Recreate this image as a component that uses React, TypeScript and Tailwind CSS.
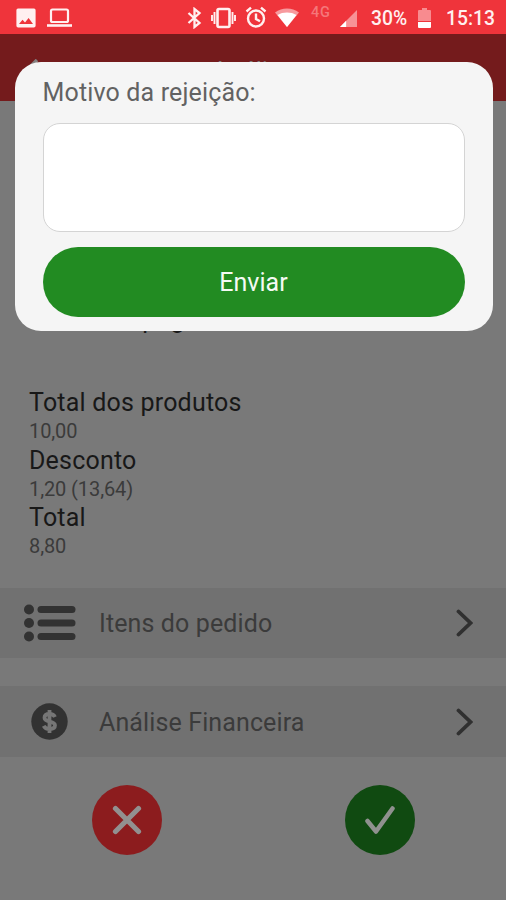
import React from "react";

const totals = [
  { label: "Total dos produtos", value: "10,00" },
  { label: "Desconto", value: "1,20 (13,64)" },
  { label: "Total", value: "8,80" },
];

function StatusBar() {
  return (
    <div className="relative z-20 flex h-[34px] shrink-0 items-center bg-[#ef343b] text-[#fff0f0]">
      <svg className="ml-[16px] mt-[1px] h-[20px] w-[20px]" viewBox="0 0 20 20" fill="currentColor">
        <path fillRule="evenodd" d="M2 .5h16a1.8 1.8 0 0 1 1.600 1.800v15.400a1.800 1.800 0 0 1-1.800 1.800H2.200a1.800 1.800 0 0 1-1.800-1.800V2.300A1.800 1.800 0 0 1 2 .5ZM3 16h14l-4.400-6-3.600 4.500L6.500 11.800Z" />
      </svg>
      <svg className="ml-[11px] mt-[1px] h-[20px] w-[25px]" viewBox="0 0 25 20" fill="none" stroke="currentColor" strokeWidth="2.200">
        <rect x="4" y="1.500" width="17" height="12.500" rx="1.500" />
        <path d="M0 17.500h25" strokeWidth="2.600" />
      </svg>
      <svg className="ml-[115px] mt-[1px] h-[22px] w-[15px]" viewBox="0 0 15 22" fill="none" stroke="currentColor" strokeWidth="2.300">
        <path d="m1.500 6 11 10-5 4V2l5 4-11 10" />
      </svg>
      <svg className="ml-[9px] mt-[1px] h-[22px] w-[25px]" viewBox="0 0 25 22" fill="none" stroke="currentColor">
        <rect x="6.500" y="2" width="12" height="18" rx="1.500" strokeWidth="2.600" />
        <path d="M3.500 5v12M21.500 5v12M1 8v6M24 8v6" strokeWidth="1.900" />
      </svg>
      <svg className="ml-[9px] h-[22px] w-[22px]" viewBox="0 0 22 22" fill="none" stroke="currentColor" strokeWidth="2.400">
        <circle cx="11" cy="12.500" r="8" />
        <path d="M11 7.500V13l4 2.200M1.500 5.500 6 1.700M20.500 5.500 16 1.700" />
      </svg>
      <svg className="ml-[8px] mt-[1px] h-[20px] w-[24px]" viewBox="0 0 24 20">
        <path d="M0 4.500C7-.7 17-.7 24 4.500L12 19Z" fill="#f79a9e" />
        <path d="M2.500 7C8 3.700 16 3.700 21.500 7L12 19Z" fill="#fff" />
      </svg>
      <span className="ml-[12px] mb-[7px] w-[23px] font-[Roboto,sans-serif] text-[14.500px] font-medium leading-none tracking-[0.8px] text-[#f5767a]">4G</span>
      <svg className="ml-[6px] mt-[3px] h-[17px] w-[17px]" viewBox="0 0 18 18">
        <path d="M18 0v18H0Z" fill="#f79296" />
        <path d="M6.500 11.500V18H0Z" fill="#fff" />
      </svg>
      <span className="ml-[14px] mt-[3px] w-[38px] whitespace-nowrap font-[Roboto,sans-serif] text-[19.300px] font-medium leading-none">30%</span>
      <svg className="ml-[9px] mt-[1px] h-[22px] w-[13px]" viewBox="0 0 13 22">
        <path d="M1 3h3V1h5v2h3q1 0 1 1v10H0V4q0-1 1-1Z" fill="#f88b8f" />
        <path d="M0 15h13v5q0 1-1 1H1q-1 0-1-1Z" fill="#fff" />
      </svg>
      <span className="ml-[15px] mt-[3px] whitespace-nowrap font-[Roboto,sans-serif] text-[19.300px] font-medium leading-none">15:13</span>
    </div>
  );
}

function MenuRow({ icon, label }: { icon: React.ReactNode; label: string }) {
  return (
    <div className="flex h-full items-center bg-[#717171] pr-[33px]">
      <div className="flex w-[99px] justify-center text-[#323232]">{icon}</div>
      <span className="flex-1 pt-[1px] text-[25px] leading-none tracking-[0.12px] text-[#3b3b3b]">{label}</span>
      <svg className="h-[28px] w-[17px]" viewBox="0 0 17 28" fill="none" stroke="#303030" strokeWidth="3.800" strokeLinecap="round">
        <path d="m2.500 2.500 12 11.500-12 11.500" />
      </svg>
    </div>
  );
}

function Modal() {
  return (
    <div className="absolute left-[14.500px] top-[62px] z-30 flex h-[269px] w-[478px] flex-col rounded-[26px] bg-[#f5f5f5] px-[28px]">
      <label htmlFor="motivo" className="mt-[15px] h-[46px] text-[25px] leading-[32px] tracking-[0.15px] text-[#626262]">Motivo da rejeição:</label>
      <textarea id="motivo" className="block h-[109px] w-full shrink-0 resize-none rounded-[17px] border border-[#d4d4d4] bg-white outline-none" />
      <button className="mt-[15px] h-[70px] w-full shrink-0 rounded-full bg-[#228b22] text-[25px] leading-none text-[#f4faf4]">Enviar</button>
    </div>
  );
}

export default function App() {
  return (
    <div className="relative flex h-[900px] w-[506px] flex-col overflow-hidden bg-[#797979] font-[Roboto,sans-serif]">
      <StatusBar />
      <header className="flex h-[67px] shrink-0 items-center bg-[#741b1c] px-[24px] text-[#858080]">
        <svg className="mt-[4px] h-[22px] w-[24px]" viewBox="0 0 24 22" fill="none" stroke="currentColor" strokeWidth="3.500">
          <path d="M13 1 3 11l10 10" />
        </svg>
        <span className="ml-[164px] mt-[7px] text-[25px] leading-none">Análise</span>
      </header>
      <div className="flex h-[487px] shrink-0 flex-col px-[29px] pt-[204px]">
        <p className="h-[83px] text-[25px] leading-[29px] tracking-[0.2px] text-[#181818]">Forma de pagamento</p>
        {totals.map((t) => (
          <div key={t.label} className="flex h-[57.700px] shrink-0 flex-col">
            <span className="text-[25px] leading-[30px] tracking-[0.2px] text-[#181818]">{t.label}</span>
            <span className="text-[20px] leading-[27px] tracking-[-0.1px] text-[#3b3b3b]">{t.value}</span>
          </div>
        ))}
      </div>
      <div className="h-[70px] shrink-0">
        <MenuRow
          label="Itens do pedido"
          icon={
            <svg className="h-[38px] w-[52px]" viewBox="0 0 52 38" fill="currentColor">
              <circle cx="5" cy="5.500" r="5" /><circle cx="5" cy="19" r="5" /><circle cx="5" cy="32.500" r="5" />
              <rect x="13.500" y="2" width="38" height="7" rx="3.500" /><rect x="13.500" y="15.500" width="38" height="7" rx="3.500" /><rect x="13.500" y="29" width="38" height="7" rx="3.500" />
            </svg>
          }
        />
      </div>
      <div className="mt-[28px] h-[71px] shrink-0">
        <MenuRow
          label="Análise Financeira"
          icon={
            <svg className="h-[37px] w-[37px]" viewBox="0 0 37 37">
              <circle cx="18.500" cy="18.500" r="18.200" fill="currentColor" />
              <path d="M24 14c-1-2-3-3-5.500-3-3 0-5 1.300-5 3.700 0 5.300 10.500 2.500 10.500 7.600 0 2.400-2.200 3.700-5.300 3.700-3 0-5-1-6-3.100M18.500 7v23" fill="none" stroke="#767676" strokeWidth="3.800" />
            </svg>
          }
        />
      </div>
      <div className="flex flex-1 justify-between px-[91.500px] pt-[28px]">
        <button className="flex h-[70px] w-[70px] items-center justify-center rounded-full bg-[#8c1c1e]">
          <svg className="h-[30px] w-[30px]" viewBox="0 0 30 30" stroke="#929090" strokeWidth="5.200" strokeLinecap="round">
            <path d="m3.500 3.500 23 23M26.500 3.500l-23 23" />
          </svg>
        </button>
        <button className="flex h-[70px] w-[70px] items-center justify-center rounded-full bg-[#104a11]">
          <svg className="h-[30px] w-[30px]" viewBox="0 0 30 30" fill="none" stroke="#8f918f" strokeWidth="4.500" strokeLinecap="round" strokeLinejoin="round">
            <path d="m2.500 16 8.500 10.500L27.500 3.500" />
          </svg>
        </button>
      </div>
      <Modal />
    </div>
  );
}
